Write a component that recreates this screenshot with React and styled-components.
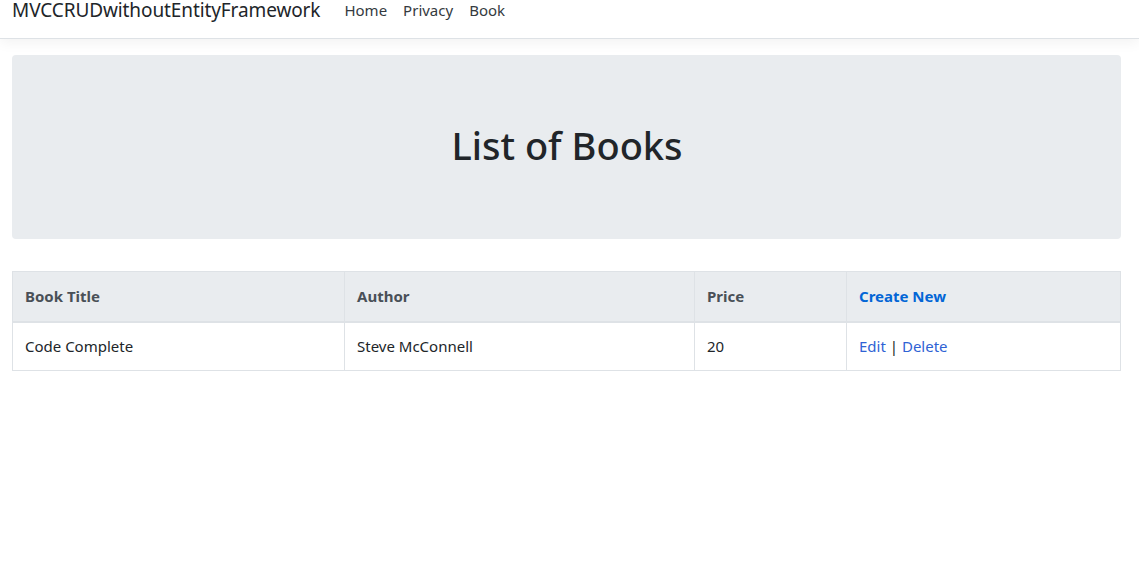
import React from 'react'
import styled, { createGlobalStyle } from 'styled-components'

const GlobalStyle = createGlobalStyle`
  body {
    margin: 0;
    background: #fff;
    color: #212529;
    font-family: "Noto Sans", "Open Sans", "Liberation Sans", sans-serif;
    font-size: 15px;
  }
  * { box-sizing: border-box; }
`

const Navbar = styled.nav`
  height: 39px;
  display: flex;
  align-items: flex-start;
  padding: 1px 12px 0;
  border-bottom: 1px solid #dee2e6;
  box-shadow: 0 4px 12px rgba(0, 0, 0, 0.05);
  background: #fff;
`
const Brand = styled.a`
  font-size: 19px;
  line-height: 19px;
  letter-spacing: -0.1px;
  color: #212529;
  text-decoration: none;
  margin-right: 24px;
`
const NavLinks = styled.div`
  display: flex;
  gap: 16px;
`
const NavLink = styled.a`
  font-size: 15px;
  line-height: 18px;
  color: #343a40;
  text-decoration: none;
`
const Main = styled.main`
  width: 1109px;
  margin-left: 12px;
  padding-top: 16px;
`
const Jumbotron = styled.div`
  height: 184px;
  padding-bottom: 4px;
  background: #e9ecef;
  border-radius: 4px;
  display: flex;
  align-items: center;
  justify-content: center;
`
const Heading = styled.h1`
  margin: 0 0 0 1px;
  font-size: 38px;
  font-weight: 500;
  color: #212529;
`
const Table = styled.table`
  width: 100%;
  margin-top: 32px;
  border-collapse: collapse;
`
const Th = styled.th`
  width: ${(p) => p.$w};
  height: 50px;
  text-align: left;
  padding: 0 12px;
  background: #e9ecef;
  color: ${(p) => (p.$link ? '#0366d6' : '#495057')};
  font-weight: 700;
  font-size: 15px;
  border: 1px solid #dee2e6;
  border-bottom: 2px solid #dee2e6;
`
const Td = styled.td`
  height: 49px;
  padding: 0 12px;
  border: 1px solid #dee2e6;
  font-size: 15px;
  color: #212529;
`
const Link = styled.a`
  color: #2f62d4;
  text-decoration: none;
`

const books = [{ title: 'Code Complete', author: 'Steve McConnell', price: 20 }]

export default function App() {
  return (
    <>
      <GlobalStyle />
      <Navbar>
        <Brand href="#">MVCCRUDwithoutEntityFramework</Brand>
        <NavLinks>
          <NavLink href="#">Home</NavLink>
          <NavLink href="#">Privacy</NavLink>
          <NavLink href="#">Book</NavLink>
        </NavLinks>
      </Navbar>
      <Main>
        <Jumbotron>
          <Heading>List of Books</Heading>
        </Jumbotron>
        <Table>
          <thead>
            <tr>
              <Th $w="332px">Book Title</Th>
              <Th $w="350px">Author</Th>
              <Th $w="152px">Price</Th>
              <Th $link>Create New</Th>
            </tr>
          </thead>
          <tbody>
            {books.map((b) => (
              <tr key={b.title}>
                <Td>{b.title}</Td>
                <Td>{b.author}</Td>
                <Td>{b.price}</Td>
                <Td>
                  <Link href="#">Edit</Link> | <Link href="#">Delete</Link>
                </Td>
              </tr>
            ))}
          </tbody>
        </Table>
      </Main>
    </>
  )
}
